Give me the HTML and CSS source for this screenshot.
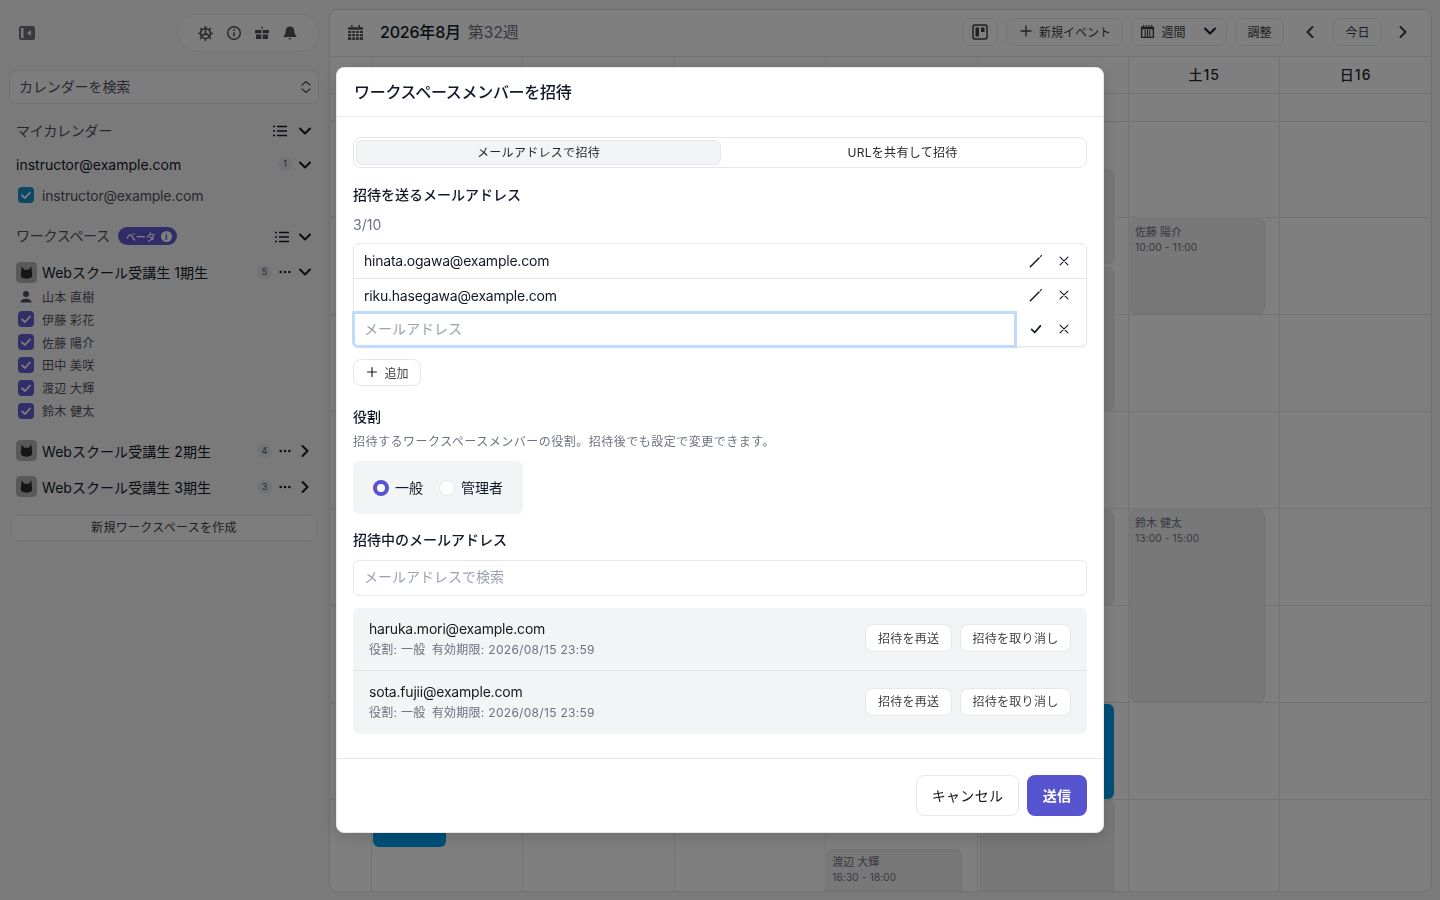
FILE: index.html
```html
<!DOCTYPE html>
<html lang="ja">
<head>
<meta charset="utf-8">
<title>カレンダー</title>
<link rel="stylesheet" href="styles.css">
</head>
<body>
<svg class="defs" aria-hidden="true">
  <symbol id="chev-down" viewBox="0 0 16 16"><path d="M3 5.500 8 10.500 13 5.500" fill="none" stroke="currentColor" stroke-width="2" stroke-linecap="round" stroke-linejoin="round"/></symbol>
  <symbol id="chev-right" viewBox="0 0 16 16"><path d="M5.500 3 10.500 8 5.500 13" fill="none" stroke="currentColor" stroke-width="2" stroke-linecap="round" stroke-linejoin="round"/></symbol>
  <symbol id="chev-left" viewBox="0 0 16 16"><path d="M10.500 3 5.500 8 10.500 13" fill="none" stroke="currentColor" stroke-width="2" stroke-linecap="round" stroke-linejoin="round"/></symbol>
  <symbol id="list" viewBox="0 0 16 16"><path d="M1 3.500h2M1 8h2M1 12.500h2M5 3.500h10M5 8h10M5 12.500h10" fill="none" stroke="currentColor" stroke-width="1.500"/></symbol>
  <symbol id="dots" viewBox="0 0 16 16"><circle cx="3" cy="8" r="1.400" fill="currentColor"/><circle cx="8" cy="8" r="1.400" fill="currentColor"/><circle cx="13" cy="8" r="1.400" fill="currentColor"/></symbol>
  <symbol id="plus" viewBox="0 0 16 16"><path d="M8 3v10M3 8h10" fill="none" stroke="currentColor" stroke-width="1.300" stroke-linecap="round"/></symbol>
  <symbol id="close" viewBox="0 0 16 16"><path d="M3.500 3.500 12.500 12.500M12.500 3.500 3.500 12.500" fill="none" stroke="currentColor" stroke-width="1.300" stroke-linecap="round"/></symbol>
  <symbol id="pencil" viewBox="0 0 16 16"><path d="M1.500 14.500 11.500 4.500" fill="none" stroke="currentColor" stroke-width="1.700" stroke-linecap="round"/><path d="M13 3 14.300 1.700" fill="none" stroke="currentColor" stroke-width="1.200" stroke-linecap="round"/></symbol>
  <symbol id="check" viewBox="0 0 16 16"><path d="M3 8.500 6.500 12 13 4.500" fill="none" stroke="currentColor" stroke-width="2" stroke-linecap="round" stroke-linejoin="round"/></symbol>
  <symbol id="tick" viewBox="0 0 16 16"><path d="M4 8.300 7 11 12 5.500" fill="none" stroke="#fff" stroke-width="1.800" stroke-linecap="round" stroke-linejoin="round"/></symbol>
  <symbol id="cat" viewBox="0 0 22 22"><rect width="22" height="22" rx="4.500" fill="#b2b2b4"/><path d="M6 4.500 8.500 8h5L16 4.500l1 9.500c0 2-2.400 3.500-6 3.500S5 16 5 14z" fill="#2a2a2e"/></symbol>
</svg>

<div class="app">
  <aside class="sidebar">
    <div class="side-top">
      <svg class="toggle-icon" viewBox="0 0 16 14" width="16" height="14"><rect width="16" height="14" rx="2.500" fill="#71717a"/><rect x="2" y="2" width="2.500" height="10" rx="0.500" fill="#f4f4f6"/><path d="M12 4v6L8 7z" fill="#f4f4f6"/></svg>
      <div class="pill">
        <svg class="pill-icon" viewBox="0 0 16 16" width="17" height="17"><g fill="none" stroke="currentColor" stroke-width="1.500"><circle cx="8" cy="8" r="4.700"/><path d="M8 1v2.300M8 12.700V15M1 8h2.300M12.700 8H15M3 3l1.700 1.700M11.300 11.300 13 13M3 13l1.700-1.700M11.300 4.700 13 3M8 8V3.500M8 8l3.800 2.300M8 8l-3.800 2.300"/></g></svg>
        <svg class="pill-icon" viewBox="0 0 16 16" width="16" height="16"><circle cx="8" cy="8" r="6.300" fill="none" stroke="currentColor" stroke-width="1.500"/><path d="M8 7.300v4" stroke="currentColor" stroke-width="1.700"/><circle cx="8" cy="5" r="1" fill="currentColor"/></svg>
        <svg class="pill-icon" viewBox="0 0 16 16" width="16" height="16"><path d="M1 5h6.300v3.200H1zM8.700 5H15v3.200H8.700zM2 9.500h5.300V14H2zM8.700 9.500H14V14H8.700z" fill="currentColor"/><path d="M8 1.200 9 3l-1 1.200L7 3z" fill="currentColor"/></svg>
        <svg class="pill-icon" viewBox="0 0 16 16" width="16" height="16"><path d="M8 1.500c-2.800 0-4.300 2-4.300 4.600 0 2.900-1.200 4-2 5v1h12.600v-1c-.8-1-2-2.100-2-5 0-2.600-1.500-4.600-4.300-4.600zM6.300 13.300a1.800 1.800 0 0 0 3.400 0z" fill="currentColor"/></svg>
      </div>
    </div>
    <div class="search-select">
      <span>カレンダーを検索</span>
      <svg viewBox="0 0 12 16" width="12" height="16"><path d="M2 6l4-3.500L10 6M2 10l4 3.500L10 10" fill="none" stroke="currentColor" stroke-width="1.200" stroke-linecap="round" stroke-linejoin="round"/></svg>
    </div>

    <div class="sec-row sec-my">
      <span class="sec-title">マイカレンダー</span>
      <svg class="ico-list"><use href="#list"/></svg>
      <svg class="ico-chev"><use href="#chev-down"/></svg>
    </div>
    <div class="acct-row">
      <span class="acct-name">instructor@example.com</span>
      <span class="badge">1</span>
      <svg class="ico-chev"><use href="#chev-down"/></svg>
    </div>
    <div class="check-row">
      <span class="cb cb-blue"><svg><use href="#tick"/></svg></span>
      <span class="check-label">instructor@example.com</span>
    </div>

    <div class="sec-row sec-ws">
      <span class="sec-title">ワークスペース</span>
      <span class="beta">ベータ<i class="beta-i">i</i></span>
      <svg class="ico-list"><use href="#list"/></svg>
      <svg class="ico-chev"><use href="#chev-down"/></svg>
    </div>
    <div class="ws-row ws-first">
      <svg class="cat"><use href="#cat"/></svg>
      <span class="ws-name">Webスクール受講生 1期生</span>
      <span class="badge">5</span>
      <svg class="ico-dots"><use href="#dots"/></svg>
      <svg class="ico-chev"><use href="#chev-down"/></svg>
    </div>
    <ul class="members">
      <li class="member"><svg class="person" viewBox="0 0 16 16" width="16" height="16"><circle cx="8" cy="5" r="3" fill="currentColor"/><path d="M2.500 13.500c0-2.500 2.500-3.700 5.500-3.700s5.500 1.200 5.500 3.700z" fill="currentColor"/></svg><span>山本 直樹</span></li>
      <li class="member"><span class="cb cb-indigo"><svg><use href="#tick"/></svg></span><span>伊藤 彩花</span></li>
      <li class="member"><span class="cb cb-indigo"><svg><use href="#tick"/></svg></span><span>佐藤 陽介</span></li>
      <li class="member"><span class="cb cb-indigo"><svg><use href="#tick"/></svg></span><span>田中 美咲</span></li>
      <li class="member"><span class="cb cb-indigo"><svg><use href="#tick"/></svg></span><span>渡辺 大輝</span></li>
      <li class="member"><span class="cb cb-indigo"><svg><use href="#tick"/></svg></span><span>鈴木 健太</span></li>
    </ul>
    <div class="ws-row ws-second">
      <svg class="cat"><use href="#cat"/></svg>
      <span class="ws-name">Webスクール受講生 2期生</span>
      <span class="badge">4</span>
      <svg class="ico-dots"><use href="#dots"/></svg>
      <svg class="ico-chev"><use href="#chev-right"/></svg>
    </div>
    <div class="ws-row ws-third">
      <svg class="cat"><use href="#cat"/></svg>
      <span class="ws-name">Webスクール受講生 3期生</span>
      <span class="badge">3</span>
      <svg class="ico-dots"><use href="#dots"/></svg>
      <svg class="ico-chev"><use href="#chev-right"/></svg>
    </div>
    <button class="create-ws">新規ワークスペースを作成</button>
  </aside>

  <main class="calendar">
    <header class="cal-head">
      <svg class="cal-icon" viewBox="0 0 16 16" width="17" height="17"><path d="M1 3h14v12H1z" fill="currentColor"/><path d="M4.500 1v2M11.500 1v2" stroke="currentColor" stroke-width="1.500"/><path d="M1 6h14M1 9h14M1 12h14M4.500 6v9M8 6v9M11.500 6v9" stroke="#fff" stroke-width="1"/></svg>
      <h1 class="cal-month">2026年8月</h1>
      <span class="cal-week">第32週</span>
      <div class="cal-tools">
        <button class="tool tool-icon"><svg viewBox="0 0 16 16" width="16" height="16"><rect x="1" y="1" width="14" height="14" rx="2" fill="none" stroke="currentColor" stroke-width="1.500"/><path d="M3.500 3.500h3.500v9H3.500zM9 3.500h3.500V8H9z" fill="currentColor"/></svg></button>
        <button class="tool tool-new"><svg class="ico14"><use href="#plus"/></svg>新規イベント</button>
        <button class="tool tool-view"><svg viewBox="0 0 16 16" width="15" height="15"><path d="M1 3h14v12H1zM2.500 5.500V13.500h11V5.500z" fill="currentColor" fill-rule="evenodd"/><path d="M3.500 1v3M6.500 1v3M9.500 1v3M12.500 1v3M5.500 6v8M8 6v8M10.500 6v8" stroke="currentColor" stroke-width="1.200"/></svg><span class="view-label">週間</span><svg class="ico-chev"><use href="#chev-down"/></svg></button>
        <button class="tool tool-adjust">調整</button>
        <svg class="nav-arrow nav-prev"><use href="#chev-left"/></svg>
        <button class="tool tool-today">今日</button>
        <svg class="nav-arrow nav-next"><use href="#chev-right"/></svg>
      </div>
    </header>
    <div class="cal-grid">
      <div class="col col-gutter">
        <div class="day-head"></div><div class="allday"></div>
        <div class="hour"><span class="time">9:00</span></div><div class="hour"><span class="time">10:00</span></div><div class="hour"><span class="time">11:00</span></div><div class="hour"><span class="time">12:00</span></div><div class="hour"><span class="time">13:00</span></div><div class="hour"><span class="time">14:00</span></div><div class="hour"><span class="time">15:00</span></div><div class="hour"><span class="time">16:00</span></div>
      </div>
      <div class="col">
        <div class="day-head">月10</div><div class="allday"></div>
        <div class="hour"></div><div class="hour"></div><div class="hour"></div><div class="hour"></div><div class="hour"></div><div class="hour"></div><div class="hour"></div><div class="hour"></div>
        <div class="event ev-blue ev-mon"></div>
      </div>
      <div class="col">
        <div class="day-head">火11</div><div class="allday"></div>
        <div class="hour"></div><div class="hour"></div><div class="hour"></div><div class="hour"></div><div class="hour"></div><div class="hour"></div><div class="hour"></div><div class="hour"></div>
      </div>
      <div class="col">
        <div class="day-head">水12</div><div class="allday"></div>
        <div class="hour"></div><div class="hour"></div><div class="hour"></div><div class="hour"></div><div class="hour"></div><div class="hour"></div><div class="hour"></div><div class="hour"></div>
      </div>
      <div class="col">
        <div class="day-head">木13</div><div class="allday"></div>
        <div class="hour"></div><div class="hour"></div><div class="hour"></div><div class="hour"></div><div class="hour"></div><div class="hour"></div><div class="hour"></div><div class="hour"></div>
        <div class="event ev-grey ev-thu"><span class="ev-name">渡辺 大輝</span><span class="ev-time">16:30 - 18:00</span></div>
      </div>
      <div class="col">
        <div class="day-head">金14</div><div class="allday"></div>
        <div class="hour"></div><div class="hour"></div><div class="hour"></div><div class="hour"></div><div class="hour"></div><div class="hour"></div><div class="hour"></div><div class="hour"></div>
        <div class="event ev-grey ev-fri ev-f1"></div>
        <div class="event ev-grey ev-fri ev-f2"></div>
        <div class="event ev-grey ev-fri ev-f3"></div>
        <div class="event ev-blue ev-fri ev-f4"></div>
        <div class="event ev-grey ev-fri ev-f5"></div>
      </div>
      <div class="col">
        <div class="day-head">土15</div><div class="allday"></div>
        <div class="hour"></div><div class="hour"></div><div class="hour"></div><div class="hour"></div><div class="hour"></div><div class="hour"></div><div class="hour"></div><div class="hour"></div>
        <div class="event ev-grey ev-sat ev-s1"><span class="ev-name">佐藤 陽介</span><span class="ev-time">10:00 - 11:00</span></div>
        <div class="event ev-grey ev-sat ev-s2"><span class="ev-name">鈴木 健太</span><span class="ev-time">13:00 - 15:00</span></div>
      </div>
      <div class="col col-last">
        <div class="day-head">日16</div><div class="allday"></div>
        <div class="hour"></div><div class="hour"></div><div class="hour"></div><div class="hour"></div><div class="hour"></div><div class="hour"></div><div class="hour"></div><div class="hour"></div>
      </div>
    </div>
  </main>
</div>

<div class="overlay">
  <section class="modal">
    <header class="modal-head"><h2>ワークスペースメンバーを招待</h2></header>
    <div class="modal-body">
      <div class="tabs">
        <button class="tab tab-active">メールアドレスで招待</button>
        <button class="tab">URLを共有して招待</button>
      </div>
      <h3 class="label label-send">招待を送るメールアドレス</h3>
      <p class="count">3/10</p>
      <div class="email-list">
        <div class="email-row email-row-1">
          <span class="email">hinata.ogawa@example.com</span>
          <span class="act"><svg><use href="#pencil"/></svg></span>
          <span class="act"><svg><use href="#close"/></svg></span>
        </div>
        <div class="email-row email-row-2">
          <span class="email">riku.hasegawa@example.com</span>
          <span class="act"><svg><use href="#pencil"/></svg></span>
          <span class="act"><svg><use href="#close"/></svg></span>
        </div>
        <div class="email-row email-row-3">
          <span class="email-input">メールアドレス</span>
          <span class="act"><svg><use href="#check"/></svg></span>
          <span class="act"><svg><use href="#close"/></svg></span>
        </div>
      </div>
      <button class="add-btn"><svg><use href="#plus"/></svg>追加</button>
      <h3 class="label label-role">役割</h3>
      <p class="hint">招待するワークスペースメンバーの役割。招待後でも設定で変更できます。</p>
      <div class="radios">
        <span class="radio radio-on"></span><span class="radio-text">一般</span>
        <span class="radio radio-off"></span><span class="radio-text">管理者</span>
      </div>
      <h3 class="label label-pending">招待中のメールアドレス</h3>
      <div class="search-box">メールアドレスで検索</div>
      <div class="invites">
        <div class="invite invite-first">
          <div class="invite-info">
            <div class="invite-mail">haruka.mori@example.com</div>
            <div class="invite-meta"><span>役割: 一般</span><span>有効期限: 2026/08/15 23:59</span></div>
          </div>
          <button class="mini-btn">招待を再送</button>
          <button class="mini-btn">招待を取り消し</button>
        </div>
        <div class="invite">
          <div class="invite-info">
            <div class="invite-mail">sota.fujii@example.com</div>
            <div class="invite-meta"><span>役割: 一般</span><span>有効期限: 2026/08/15 23:59</span></div>
          </div>
          <button class="mini-btn">招待を再送</button>
          <button class="mini-btn">招待を取り消し</button>
        </div>
      </div>
    </div>
    <footer class="modal-foot">
      <button class="btn btn-cancel">キャンセル</button>
      <button class="btn btn-send">送信</button>
    </footer>
  </section>
</div>
</body>
</html>
```
FILE: styles.css
```css
* { box-sizing: border-box; }
html, body { margin: 0; height: 100%; }
body {
  font-family: Inter, "Noto Sans CJK JP", sans-serif;
  font-size: 14px;
  color: #111827;
  background: #f4f4f6;
  overflow: hidden;
}
h1, h2, h3, p, ul { margin: 0; padding: 0; }
ul { list-style: none; }
button { font: inherit; color: inherit; background: none; border: 0; padding: 0; }
svg { display: block; flex: none; }
.defs { position: absolute; width: 0; height: 0; }

.app { display: flex; height: 900px; }

/* sidebar */
.sidebar { width: 329px; flex: none; padding: 14px 10px 0 9px; display: flex; flex-direction: column; color: #52525b; }
.side-top { display: flex; align-items: center; height: 38px; }
.toggle-icon { margin-left: 10px; }
.pill { margin-left: auto; width: 141px; height: 38px; border: 1px solid #ebebef; border-radius: 19px; background: #fbfbfc; display: flex; align-items: center; padding-left: 18px; gap: 12px; color: #52525b; }
.search-select { margin-top: 18px; height: 34px; border: 1px solid #e5e5e9; border-radius: 8px; background: #fbfbfc; display: flex; align-items: center; justify-content: space-between; padding: 0 6px 2px 9px; color: #52525b; letter-spacing: -0.1px; }
.search-select svg { margin-top: 2px; }
.sec-row, .acct-row, .ws-row { display: flex; align-items: center; height: 30px; padding: 0 6px 0 7px; }
.sec-my { margin-top: 11px; }
.sec-my svg, .acct-row svg { margin-top: 2px; }
.acct-row { margin-top: 4px; }
.sec-title { color: #52525b; letter-spacing: -0.3px; }
.ico-list { width: 16px; height: 16px; margin-left: auto; color: #111827; }
.ico-chev { width: 16px; height: 16px; color: #111827; margin-left: 9px; }
.ico-dots { width: 14px; height: 14px; color: #111827; margin-left: 6px; }
.acct-row .ico-chev, .ws-row .ico-chev { margin-left: 5px; }
.acct-name { color: #111827; margin-right: auto; }
.badge { width: 14px; height: 14px; border-radius: 7px; background: #e5e7eb; font-size: 9px; line-height: 14px; text-align: center; color: #4b5563; }
.check-row { display: flex; align-items: center; height: 26px; margin-top: 3px; padding-left: 9px; gap: 8px; }
.cb { width: 16px; height: 16px; border-radius: 4px; display: block; }
.cb svg { width: 16px; height: 16px; }
.cb-blue { background: #1b8fc9; }
.cb-indigo { background: #645fd0; }
.check-label { color: #52525b; letter-spacing: -0.18px; }
.sec-ws { margin-top: 12px; }
.sec-ws svg { margin-top: 3px; }
.sec-ws .ico-chev { margin-left: 7px; }
.beta { margin: 2px 0 0 8px; height: 18px; padding: 0 5px 0 8px; border-radius: 9px; background: #5e58d0; color: #fff; font-size: 10px; display: flex; align-items: center; gap: 5px; font-weight: 500; }
.beta-i { width: 11px; height: 11px; border-radius: 50%; background: #fff; color: #5e58d0; font-size: 9px; line-height: 11px; text-align: center; font-style: normal; font-weight: 700; }
.ws-row { padding-left: 7px; }
.ws-first { margin-top: 7px; }
.cat { width: 21px; height: 21px; margin-right: 5px; }
.ws-name { color: #111827; margin-right: auto; letter-spacing: 0.05px; }
.ws-row .badge { width: 15px; }
.members { margin-top: -1.800px; }
.member { display: flex; align-items: center; height: 22.800px; padding-left: 9px; gap: 8px; font-size: 12px; color: #52525b; letter-spacing: 0.2px; }
.person { color: #52525b; }
.ws-second { margin-top: 14px; }
.ws-third { margin-top: 6px; }
.create-ws { margin: 13px 2px 0 2px; height: 26px; padding-bottom: 2px; border: 1px solid #e5e5e9; border-radius: 8px; background: #fbfbfc; font-size: 12px; color: #3f3f46; letter-spacing: 0.3px; }

/* calendar */
.calendar { flex: none; width: 1103px; height: 883px; margin-top: 9px; background: #fff; border: 1px solid #dedee2; border-radius: 8px; overflow: hidden; display: flex; flex-direction: column; }
.cal-head { height: 47px; flex: none; display: flex; align-items: center; padding: 0 0 2px 17px; border-bottom: 1px solid #e5e7eb; }
.cal-icon { color: #52525b; margin-right: 16px; }
.cal-month { margin: -2px 7px 0 0; font-size: 16px; font-weight: 500; color: #111827; letter-spacing: -0.2px; }
.cal-week { margin-top: -2px; font-size: 16px; color: #6b7280; letter-spacing: -0.2px; }
.cal-tools { margin-left: auto; display: flex; align-items: center; gap: 8px; padding-right: 20px; color: #3f3f46; font-size: 12px; letter-spacing: 0.3px; }
.tool { height: 28px; padding-bottom: 2px; border: 1px solid #e5e7eb; border-radius: 8px; display: flex; align-items: center; justify-content: center; }
.tool-icon { width: 36px; padding-bottom: 0; }
.tool-new { width: 117px; gap: 5px; }
.ico14 { width: 16px; height: 16px; }
.tool-view { width: 96px; gap: 6px; }
.view-label { margin-right: 6px; }
.tool-view .ico-chev { margin-left: 4px; }
.tool-adjust { width: 49px; }
.tool-today { width: 49px; }
.nav-arrow { width: 16px; height: 16px; color: #3f3f46; }
.nav-prev { margin: 0 7px 0 10px; }
.nav-next { margin-left: 5px; }
.cal-grid { display: flex; flex: 1; }
.col { position: relative; width: 151.400px; flex: none; border-right: 1px solid #e5e7eb; }
.col-gutter { width: 42px; }
.col-last { border-right: 0; flex: 1; }
.day-head { height: 37px; padding-bottom: 3px; border-bottom: 1px solid #e5e7eb; display: flex; align-items: center; justify-content: center; font-size: 14px; font-weight: 500; color: #27272a; letter-spacing: 1px; }
.allday { height: 28px; margin-bottom: -1px; border-bottom: 1px solid #e5e7eb; }
.hour { height: 97px; border-bottom: 1px solid #e5e7eb; padding-top: 4px; }
.time { display: block; text-align: center; font-size: 11px; line-height: 14px; color: #6b7280; }
.event { position: absolute; border-radius: 6px; }
.ev-grey { background: #f1f1f3; border: 1px solid #e3e3e7; padding: 4px 4px; color: #71717a; }
.ev-blue { background: #00a0f0; }
.ev-name { display: block; font-size: 11px; line-height: 16px; }
.ev-time { display: block; font-size: 10px; line-height: 15px; letter-spacing: 0.2px; }
.ev-mon { left: 1px; width: 73px; top: 690px; height: 100px; }
.ev-thu { left: 1px; width: 135px; top: 792px; height: 90px; }
.ev-fri { left: 2px; width: 134px; }
.ev-f1 { top: 112px; height: 95px; }
.ev-f2 { top: 210px; height: 144px; }
.ev-f3 { top: 453px; height: 95px; }
.ev-f4 { top: 647px; height: 95px; }
.ev-f5 { top: 743px; height: 140px; }
.ev-sat { left: 1px; width: 135px; }
.ev-s1 { top: 162px; height: 95px; }
.ev-s2 { top: 453px; height: 192px; }

/* modal */
.overlay { position: fixed; inset: 0; background: rgba(0, 0, 0, 0.5); display: flex; align-items: center; justify-content: center; }
.modal { width: 768px; background: #fff; border: 1px solid #e5e7eb; border-radius: 8px; box-shadow: 0 4px 16px rgba(0, 0, 0, 0.15); display: flex; flex-direction: column; }
.modal-head { height: 49px; display: flex; align-items: center; padding: 0 16px 2px 17px; border-bottom: 1px solid #e5e7eb; }
.modal-head h2 { font-size: 16px; font-weight: 500; color: #111827; letter-spacing: -0.3px; }
.modal-body { height: 641px; padding: 20px 16px 0; display: flex; flex-direction: column; align-items: stretch; }
.tabs { height: 31px; flex: none; border: 1px solid #e5e7eb; border-radius: 8px; padding: 2px; display: flex; }
.tab { flex: 1 1 0; padding-bottom: 2px; font-size: 12px; color: #27272a; border-radius: 6px; letter-spacing: 0.3px; }
.tab-active { background: #f3f4f6; border: 1px solid #e5e7eb; }
.label { font-size: 14px; font-weight: 500; line-height: 20px; color: #111827; }
.label-send { margin-top: 17px; }
.count { margin-top: 10px; line-height: 20px; color: #6b7280; }
.email-list { margin-top: 8px; height: 104px; flex: none; border: 1px solid #e5e7eb; border-radius: 6px; box-shadow: 0 1px 2px rgba(0, 0, 0, 0.05); display: flex; flex-direction: column; }
.email-row { display: flex; align-items: center; padding-right: 8px; }
.email-row-1 { height: 35px; border-bottom: 1px solid #e5e7eb; }
.email-row-2 { height: 33px; }
.email-row-3 { height: 34px; }
.email { padding: 0 0 2px 10px; margin-right: auto; color: #111827; letter-spacing: -0.22px; }
.email-row-2 .email { padding-bottom: 0; }
.email-row-2 .act { padding-bottom: 2px; }
.email-input { width: 665px; height: 37px; flex: none; margin-left: -2px; border: 3px solid #bfdcff; border-radius: 2px 0 0 6px; color: #9ca3af; padding: 0 0 2px 9px; margin-right: auto; display: flex; align-items: center; background: #fff; }
.act { width: 28px; display: flex; justify-content: center; color: #111827; }
.act svg { width: 14px; height: 14px; }
.add-btn { margin-top: 12px; width: 68px; height: 27px; padding-bottom: 1px; border: 1px solid #e5e7eb; border-radius: 8px; font-size: 12px; display: flex; align-items: center; justify-content: center; gap: 5px; color: #3f3f46; flex: none; }
.add-btn svg { width: 14px; height: 14px; color: #111827; }
.label-role { margin-top: 21px; }
.hint { margin-top: 5px; font-size: 12px; line-height: 20px; color: #6b7280; letter-spacing: 0.5px; }
.radios { margin-top: 9px; width: 170px; height: 53px; flex: none; border-radius: 6px; background: #f3f4f6; display: flex; align-items: center; padding-left: 20px; }
.radio { width: 16px; height: 16px; border-radius: 50%; flex: none; }
.radio-on { background: #fff; border: 4.500px solid #5754cf; }
.radio-off { background: #fff; border: 1px solid #e5e7eb; margin-left: 16px; }
.radio-text { margin: -2px 0 0 6px; color: #111827; }
.label-pending { margin-top: 16px; }
.search-box { margin-top: 10px; height: 36px; flex: none; border: 1px solid #e5e7eb; border-radius: 6px; display: flex; align-items: center; padding: 0 0 5px 10px; color: #9ca3af; }
.invites { margin-top: 12px; border-radius: 6px; background: #f3f4f6; }
.invite { display: flex; align-items: center; height: 63px; padding: 0 16px; gap: 8px; }
.invite-first { border-bottom: 1px solid #e5e7eb; }
.invite-info { margin-right: auto; }
.invite-mail { color: #18181b; line-height: 20px; letter-spacing: -0.2px; }
.invite-meta { margin-top: 1px; font-size: 12px; line-height: 20px; color: #6b7280; display: flex; gap: 6px; letter-spacing: 0.3px; }
.mini-btn { height: 28px; margin-top: -2px; padding: 0 11.500px 2px; border: 1px solid #e5e7eb; border-radius: 8px; background: #fff; font-size: 12px; color: #3f3f46; letter-spacing: 0.3px; }
.modal-foot { height: 74px; border-top: 1px solid #e5e7eb; display: flex; justify-content: flex-end; align-items: center; gap: 8px; padding: 0 16px; }
.btn { height: 41px; padding-bottom: 2px; border-radius: 8px; font-size: 14px; letter-spacing: 0.3px; }
.btn-cancel { width: 103px; border: 1px solid #e5e7eb; background: #fff; color: #18181b; }
.btn-send { width: 60px; background: #5754cf; color: #fff; font-weight: 600; }
```
